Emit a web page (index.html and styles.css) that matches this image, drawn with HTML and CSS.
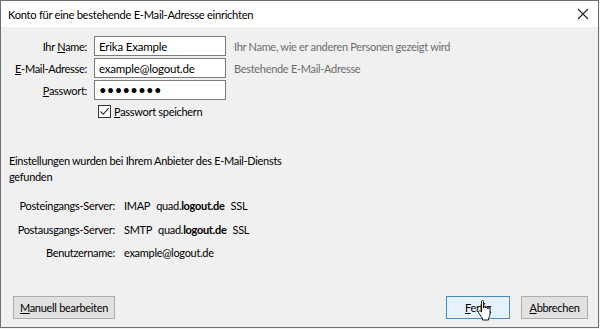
FILE: index.html
```html
<!DOCTYPE html>
<html lang="de">
    <head>
        <meta charset="UTF-8" />
        <title>Konto einrichten</title>
        <link rel="stylesheet" href="styles.css">
    </head>
    <body>
        <div class="dialog">
            <div class="titlebar">
                <span>Konto für eine bestehende E-Mail-Adresse einrichten</span>
                <svg class="close" width="12" height="12" viewBox="0 0 12 12">
                    <path d="M1 1 L11 11 M11 1 L1 11" stroke="#222" stroke-width="1.1" fill="none" />
                </svg>
            </div>

            <div class="content">
                <div class="account">
                    <label for="name">Ihr <u>N</u>ame:</label>
                    <input type="text" id="name" value="Erika Example" />
                    <span class="hint">Ihr Name, wie er anderen Personen gezeigt wird</span>

                    <label for="email"><u>E</u>-Mail-Adresse:</label>
                    <input type="text" id="email" value="example@logout.de" />
                    <span class="hint">Bestehende E-Mail-Adresse</span>

                    <label for="password"><u>P</u>asswort:</label>
                    <input type="password" id="password" class="secret" value="geheim12" />
                    <span></span>

                    <div class="remember">
                        <span class="checkbox">
                            <svg width="11" height="11" viewBox="0 0 11 11">
                                <path d="M1.5 5.5 L4.2 8.3 L9.6 2.2" stroke="#222" stroke-width="1.1" fill="none" />
                            </svg>
                        </span>
                        <span><u>P</u>asswort speichern</span>
                    </div>
                </div>

                <p class="found">Einstellungen wurden bei Ihrem Anbieter des E-Mail-Diensts<br />gefunden</p>

                <div class="servers">
                    <span class="server-label">Posteingangs-Server:</span>
                    <span class="server-value">IMAP<span class="host">quad.<b>logout.de</b></span>SSL</span>

                    <span class="server-label">Postausgangs-Server:</span>
                    <span class="server-value">SMTP<span class="host">quad.<b>logout.de</b></span>SSL</span>

                    <span class="server-label">Benutzername:</span>
                    <span class="server-value">example@logout.de</span>
                </div>

                <div class="buttons">
                    <button class="manual"><u>M</u>anuell bearbeiten</button>
                    <button class="done"><u>F</u>ertig</button>
                    <button class="cancel"><u>A</u>bbrechen</button>
                </div>
            </div>

            <svg class="cursor" width="15" height="21" viewBox="0 0 15 21">
                <path d="M4.5 1.5 c0-.6 .4-1 1-1 s1 .4 1 1 V8 h.4 V7 c0-.5.4-.9.9-.9 s.9.4.9.9 v1 h.4 V7.8 c0-.5.4-.9.9-.9 s.9.4.9.9 V9 h.3 v-.5 c0-.5.4-.9.9-.9 s.9.4.9.9 V14 c0 2-1 3.5-1.5 4.5 V20 H5.5 v-1.5 L1.8 13 c-.6-.8-.4-1.7.3-2 s1.4 0 2.4 1 V1.5 z" fill="#fff" stroke="#000" stroke-width="0.9" />
            </svg>
        </div>
    </body>
</html>
```

FILE: styles.css
```css
body {
    margin: 0;
    background: #f4f4f4;
    font-family: Lato, "Noto Sans", sans-serif;
    font-size: 11px;
    letter-spacing: -0.3px;
    color: #000;
    white-space: nowrap;
}
.dialog {
    position: relative;
    width: 599px;
    height: 328px;
    box-sizing: border-box;
    border: 1px solid #6e6e6e;
    background: #f0f0f0;
    display: flex;
    flex-direction: column;
}
.titlebar {
    height: 26px;
    background: #fff;
    display: flex;
    align-items: center;
    justify-content: space-between;
    padding: 0 9px 0 7px;
    font-size: 11.2px;
}
.content {
    flex: 1;
    display: flex;
    flex-direction: column;
    padding-top: 9px;
}
.account {
    display: grid;
    grid-template-columns: 86px 132px auto;
    grid-auto-rows: 20px;
    column-gap: 7px;
    row-gap: 2px;
    align-items: center;
}
.account label {
    text-align: right;
}
.account input {
    height: 20px;
    box-sizing: border-box;
    border: 1px solid #7a7a7a;
    padding: 0 4px;
    font-family: inherit;
    font-size: 11.5px;
    letter-spacing: -0.2px;
    background: #fff;
    outline: none;
}
.account .secret {
    font-size: 13px;
    letter-spacing: 0.3px;
}
.hint {
    color: #6d6d6d;
    margin-left: 1px;
}
.remember {
    grid-column: 2 / 4;
    display: flex;
    align-items: center;
    gap: 3px;
    margin: -1px 0 0 4px;
}
.checkbox {
    width: 13px;
    height: 13px;
    box-sizing: border-box;
    border: 1px solid #333;
    background: #fff;
    display: flex;
    align-items: center;
    justify-content: center;
}
.found {
    margin: 31px 0 0 8px;
    line-height: 16px;
}
.servers {
    display: grid;
    grid-template-columns: 114px auto;
    grid-auto-rows: 23.5px;
    column-gap: 9px;
    align-items: center;
    margin-top: 9px;
}
.server-label {
    text-align: right;
}
.host {
    margin: 0 6px;
}
.buttons {
    margin-top: auto;
    display: flex;
    padding: 0 10px 8px 12px;
}
button {
    height: 23px;
    border: 1px solid #adadad;
    background: #e1e1e1;
    font-family: inherit;
    font-size: 11px;
    letter-spacing: inherit;
    color: #000;
    padding: 0 4px;
    white-space: nowrap;
}
.manual {
    width: 102px;
    margin-right: auto;
}
.done {
    width: 64px;
    background: #e5f1fb;
    border-color: #3c8fd6;
    margin-right: 11px;
}
.cancel {
    width: 67px;
}
.cursor {
    position: absolute;
    left: 476px;
    top: 299px;
}
```
